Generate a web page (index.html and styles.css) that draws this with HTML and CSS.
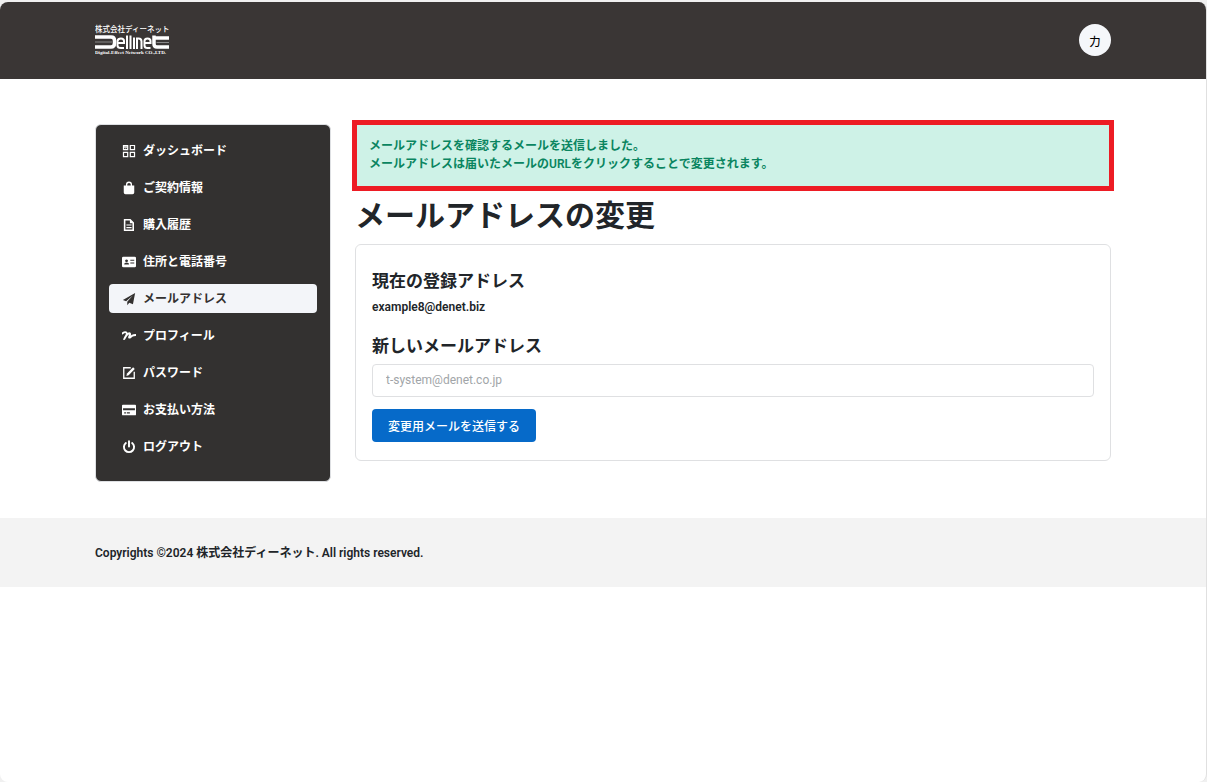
FILE: index.html
```
<!DOCTYPE html>
<html lang="ja">
<head>
    <meta charset="utf-8">
    <meta name="viewport" content="width=device-width, initial-scale=1">
    <title>メールアドレスの変更</title>
    <link rel="stylesheet" href="styles.css">
</head>
<body>
    <div class="page">
        <header class="header">
            <a href="#" class="logo" aria-label="株式会社ディーネット">
                <svg width="76" height="32" viewBox="0 0 152 64">
                    <text class="logo-name" x="0" y="15">株式会社ディーネット</text>
                    <g fill="none" stroke="#fff">
                        <path d="M0 26h32q7 0 7 7v5q0 8-7 8H0" stroke-width="7"/>
                        <path d="M45 38h13v-4q0-5-6-5t-7 5v9q0 5 7 5h6" stroke-width="4"/>
                        <path d="M64 23v27M71 23v27M78 27v23" stroke-width="4"/>
                        <path d="M84 50V29h3q6 0 6 6v15" stroke-width="4"/>
                        <path d="M99 38h12v-4q0-5-6-5t-6 5v9q0 5 6 5h6" stroke-width="4"/>
                        <path d="M148 28h-32M118 23v17q0 6 6 6h24" stroke-width="7"/>
                    </g>
                    <path d="M0 35h34v2H0zM123 36h25v2h-25z" fill="#888"/>
                    <text class="logo-sub" x="0" y="59">Digital-Effect Network CO.,LTD.</text>
                </svg>
            </a>
            <button type="button" class="avatar">カ</button>
        </header>

        <div class="container">
            <nav class="sidebar">
                <a href="#" class="menu-item">
                    <svg class="icon" viewBox="0 0 16 16"><path fill="none" stroke="currentColor" stroke-width="1.4" d="M1.700 1.700h4.800v4.800H1.700zM9.500 1.700h4.800v4.800H9.500zM1.700 9.500h4.800v4.800H1.700zM9.500 9.500h4.800v4.800H9.500z"/><path d="M2 2h4.500v2L4 5.500 2 4z" fill="currentColor" opacity=".7"/></svg>
                    ダッシュボード
                </a>
                <a href="#" class="menu-item">
                    <svg class="icon" viewBox="0 0 16 16"><path fill="currentColor" d="M4.500 5V4.200a3.500 3.500 0 0 1 7 0V5H14v8a2 2 0 0 1-2 2H4a2 2 0 0 1-2-2V5zM6 5h4V4.200a2 2 0 0 0-4 0z"/></svg>
                    ご契約情報
                </a>
                <a href="#" class="menu-item">
                    <svg class="icon" viewBox="0 0 16 16"><path fill="none" stroke="currentColor" stroke-width="1.800" d="M3 2h6.300l3.500 3.500V14H3z"/><path fill="currentColor" d="M9 2l4 4H9zM5 7.300h6v1.400H5zM5 10.300h6v1.400H5z"/></svg>
                    購入履歴
                </a>
                <a href="#" class="menu-item">
                    <svg class="icon" viewBox="0 0 16 16"><path fill="currentColor" fill-rule="evenodd" d="M1.500 2h13A1.500 1.500 0 0 1 16 3.500v9a1.500 1.500 0 0 1-1.500 1.500h-13A1.500 1.500 0 0 1 0 12.500v-9A1.500 1.500 0 0 1 1.500 2zM5.200 5a1.600 1.600 0 1 0 .01 0zM2.500 10.800h5.500q0-2-1.500-2h-2.500q-1.500 0-1.500 2zM9.500 5.500v1.200H14V5.500zM9.500 8.500v1.200H14V8.500z"/></svg>
                    住所と電話番号
                </a>
                <a href="#" class="menu-item active">
                    <svg class="icon" viewBox="0 0 16 16"><path fill="currentColor" d="M15 1L12.500 14 8.300 12.200 6 15v-3.800L12.300 4 4.700 10.600 1 9z"/></svg>
                    メールアドレス
                </a>
                <a href="#" class="menu-item">
                    <svg class="icon" viewBox="0 0 16 16"><path fill="none" stroke="currentColor" stroke-width="2.200" stroke-linecap="round" stroke-linejoin="round" d="M.3 5.200Q3.500 2.800 5 4T2.500 11.500Q5.500 5.500 8.300 4.800 10.200 5 8.600 8 7.300 10.700 9.500 9.500L12 7.500q1-.5 3.700-.7"/></svg>
                    プロフィール
                </a>
                <a href="#" class="menu-item">
                    <svg class="icon" viewBox="0 0 16 16"><path fill="none" stroke="currentColor" stroke-width="1.500" d="M10 2H2v12h12V6.500"/><path fill="currentColor" d="M12.700 1.500l1.900 1.800-7 7.200-2.600.8.700-2.600z"/></svg>
                    パスワード
                </a>
                <a href="#" class="menu-item">
                    <svg class="icon" viewBox="0 0 16 16"><path fill="currentColor" fill-rule="evenodd" d="M1 2h14a1 1 0 0 1 1 1v10a1 1 0 0 1-1 1H1a1 1 0 0 1-1-1V3a1 1 0 0 1 1-1zM1.200 6v2.300h13.600V6zM2.500 10.700v1.200h2v-1.200zM5.500 10.700v1.200H9v-1.200z"/></svg>
                    お支払い方法
                </a>
                <a href="#" class="menu-item">
                    <svg class="icon" viewBox="0 0 16 16"><path fill="none" stroke="currentColor" stroke-width="2.200" stroke-linecap="round" d="M8 1.500v6M4.400 3.500a5.800 5.800 0 1 0 7.200 0"/></svg>
                    ログアウト
                </a>
            </nav>

            <main class="content">
                <div class="alert" role="alert">
                    メールアドレスを確認するメールを送信しました。<br>
                    メールアドレスは届いたメールのURLをクリックすることで変更されます。
                </div>
                <h1>メールアドレスの変更</h1>
                <form class="card">
                    <h2>現在の登録アドレス</h2>
                    <p class="current-email">example8@denet.biz</p>
                    <label for="email">新しいメールアドレス</label>
                    <input type="email" id="email" placeholder="t-system@denet.co.jp">
                    <button type="button" class="submit">変更用メールを送信する</button>
                </form>
            </main>
        </div>

        <footer class="footer">Copyrights ©2024 株式会社ディーネット. All rights reserved.</footer>
    </div>
</body>
</html>
```

FILE: styles.css
```
* {
    box-sizing: border-box;
}

body {
    margin: 0;
    padding-top: 2px;
    background-color: #f0f0f0;
    color: #212529;
    font-family: Roboto, "Noto Sans CJK JP", sans-serif;
    font-size: 12px;
    font-weight: 600;
    line-height: 18px;
}

.page {
    min-height: calc(100vh - 2px);
    border-right: 1px solid #e0e0e0;
    border-radius: 8px;
    background-color: #fff;
    overflow: hidden;
}

.header {
    display: flex;
    justify-content: space-between;
    align-items: center;
    height: 77px;
    padding: 0 95px 1px;
    background-color: #3a3635;
}

.logo svg {
    display: block;
}

.logo-name {
    fill: #fff;
    font-family: "Noto Sans CJK JP", sans-serif;
    font-size: 15px;
    font-weight: 500;
}

.logo-sub {
    fill: #fff;
    font-family: "Liberation Serif", serif;
    font-size: 10px;
    font-weight: 700;
}

.avatar {
    width: 32px;
    height: 32px;
    padding: 0;
    border: none;
    border-radius: 50%;
    background-color: #f5f7fa;
    color: #000;
    font-family: inherit;
    font-size: 13px;
}

.container {
    display: grid;
    grid-template-columns: 236px 1fr;
    gap: 24px;
    align-items: start;
    padding: 45px 95px 36px;
}

.sidebar {
    display: flex;
    flex-direction: column;
    gap: 8px;
    padding: 11px 13px 20px;
    border: 1px solid #dee0e3;
    border-radius: 6px;
    background-color: #333130;
}

.menu-item {
    display: flex;
    align-items: center;
    gap: 7px;
    height: 29px;
    padding: 0 13px;
    border-radius: 4px;
    color: #fff;
    font-weight: 700;
    text-decoration: none;
}

.menu-item.active {
    background-color: #f3f5f9;
    color: #333130;
}

.icon {
    width: 14px;
    height: 14px;
}

.alert {
    margin: -4px -3px 0;
    padding: 12px 12px 13px;
    border: 5px solid #ed1c24;
    background-color: #cef2e7;
    color: #0a8560;
}

h1 {
    margin: 7px 0 10px;
    font-size: 30px;
    font-weight: 700;
    line-height: 36px;
}

.card {
    padding: 26px 16px 18px;
    border: 1px solid #dfe0e2;
    border-radius: 6px;
}

h2,
.card label {
    display: block;
    margin: 0;
    font-size: 17px;
    font-weight: 700;
    line-height: 20px;
}

.current-email {
    margin: 7px 0 20px;
}

.card input {
    display: block;
    width: 100%;
    height: 33px;
    margin: 8px 0 12px;
    padding: 0 13px 2px;
    border: 1px solid #dfe0e2;
    border-radius: 4px;
    font-family: inherit;
    font-size: 12px;
}

.card input::placeholder {
    color: #a1a5a8;
}

.submit {
    display: block;
    height: 33px;
    padding: 0 16px;
    border: none;
    border-radius: 4px;
    background-color: #066ac9;
    color: #fff;
    font-family: inherit;
    font-size: 12px;
    font-weight: 500;
}

.footer {
    padding: 26px 95px 25px;
    background-color: #f3f3f3;
}
```
